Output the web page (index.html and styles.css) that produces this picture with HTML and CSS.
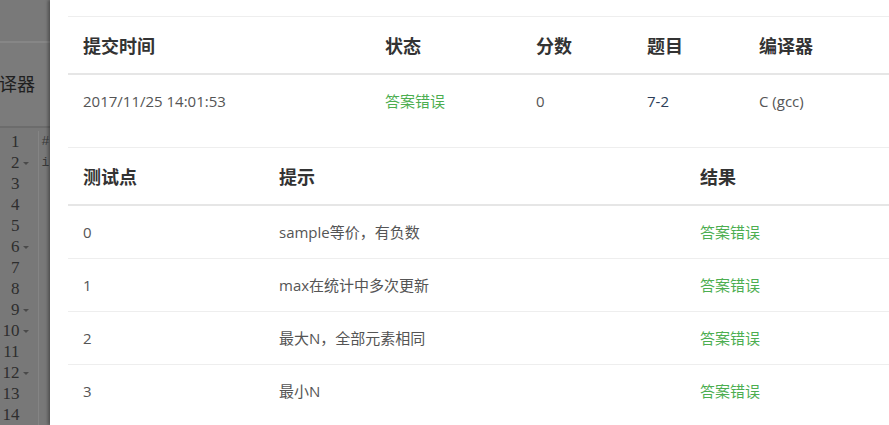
FILE: index.html
```html
<!DOCTYPE html>
<html lang="zh-CN">
<head>
  <meta charset="UTF-8">
  <title>提交详情</title>
  <link rel="stylesheet" href="styles.css">
</head>
<body>
  <div class="backdrop">
    <div class="tabs"></div>
    <div class="options"><span class="label">编译器</span></div>
    <div class="editor">
      <div class="gutter">
        <div>1</div><div>2<i class="fold"></i></div><div>3</div><div>4</div>
        <div>5</div><div>6<i class="fold"></i></div><div>7</div><div>8</div>
        <div>9<i class="fold"></i></div><div>10<i class="fold"></i></div><div>11</div>
        <div>12<i class="fold"></i></div><div>13</div><div>14</div>
      </div>
      <div class="code"><div>#</div><div>i</div></div>
    </div>
  </div>

  <div class="modal">
    <table class="grid summary">
      <colgroup><col style="width:302px"><col style="width:151px"><col style="width:111px"><col style="width:112px"><col></colgroup>
      <thead>
        <tr><th>提交时间</th><th>状态</th><th>分数</th><th>题目</th><th>编译器</th></tr>
      </thead>
      <tbody>
        <tr>
          <td>2017/11/25 14:01:53</td>
          <td class="wrong">答案错误</td>
          <td>0</td>
          <td class="link">7-2</td>
          <td>C (gcc)</td>
        </tr>
      </tbody>
    </table>

    <table class="grid cases">
      <colgroup><col style="width:196px"><col style="width:421px"><col></colgroup>
      <thead>
        <tr><th>测试点</th><th>提示</th><th>结果</th></tr>
      </thead>
      <tbody>
        <tr><td>0</td><td>sample等价，有负数</td><td class="wrong">答案错误</td></tr>
        <tr><td>1</td><td>max在统计中多次更新</td><td class="wrong">答案错误</td></tr>
        <tr><td>2</td><td>最大N，全部元素相同</td><td class="wrong">答案错误</td></tr>
        <tr><td>3</td><td>最小N</td><td class="wrong">答案错误</td></tr>
      </tbody>
    </table>
  </div>
</body>
</html>
```

FILE: styles.css
```css
html, body { margin: 0; height: 100%; overflow: hidden; }
body { display: flex; font-family: "Noto Sans CJK SC", "Noto Sans", sans-serif; background: #fff; }

/* dimmed page behind the dialog */
.backdrop { width: 50px; flex: none; background: #7b7b7b; overflow: hidden; display: flex; flex-direction: column; }
.tabs { height: 42px; border-bottom: 2px solid #868686; background: #797979; }
.options { height: 86px; border-bottom: 2px solid #6c6c6c; display: flex; align-items: center; justify-content: flex-end; padding-right: 15px; }
.label { font-size: 18px; color: #202020; white-space: nowrap; margin-top: -3px; }
.editor { flex: 1; display: flex; background: #787878; padding-top: 3px; }
.gutter { width: 40px; border-right: 1px solid #848484; font-family: "Liberation Serif", serif; font-size: 17px; color: #2e2e2e; }
.gutter div { height: 21px; line-height: 21px; padding-right: 18px; text-align: right; position: relative; }
.fold { position: absolute; right: 9px; top: 10px; border: 3px solid transparent; border-top: 3px solid #4a4a4a; }
.code { width: 9px; font-family: "Liberation Mono", monospace; font-size: 13px; color: #3a3a3a; padding-left: 3px; }
.code div { height: 21px; line-height: 21px; }

/* dialog */
.modal { flex: none; width: 900px; padding: 16px 0 0 18px; box-shadow: -2px 0 3px rgba(0, 0, 0, .35); position: relative; }
.grid { width: 860px; border-collapse: collapse; table-layout: fixed; border-top: 1px solid #eeeeee; }
.grid th { text-align: left; font-size: 18px; font-weight: bold; color: #333; padding: 17px 15px 16px; line-height: 23px; border-bottom: 2px solid #e6e6e6; }
.grid td { text-align: left; font-family: "Open Sans", "Noto Sans CJK SC", sans-serif; font-size: 15px; color: #555; padding: 15px; line-height: 22px; border-top: 1px solid #eeeeee; }
.grid tbody tr:first-child td { border-top: none; }
.cases { margin-top: 20px; }
.wrong { color: #4cae50 !important; }
.link { color: #2c3e58 !important; }
```
